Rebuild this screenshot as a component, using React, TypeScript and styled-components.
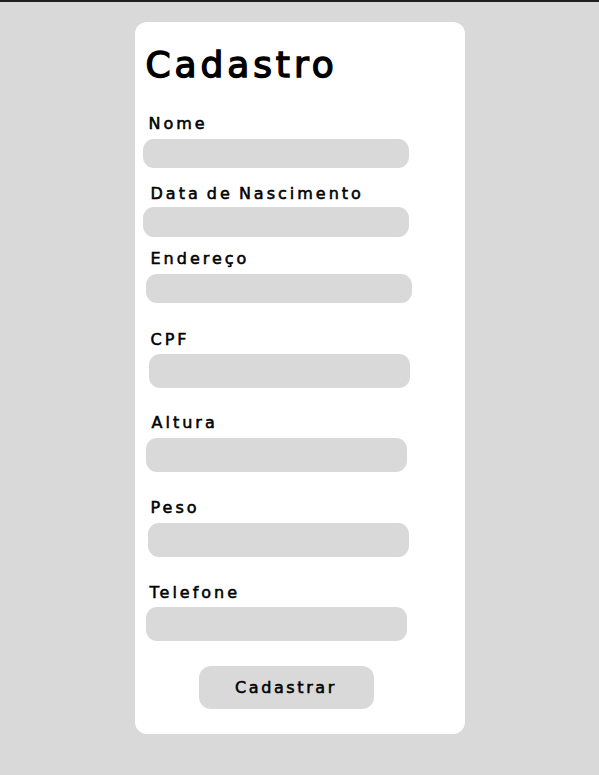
import React from "react";
import styled, { createGlobalStyle } from "styled-components";

const GlobalStyle = createGlobalStyle`
  html, body {
    margin: 0;
    padding: 0;
    background: #d9d9d9;
  }
  body {
    border-top: 2px solid #1f1f1f;
    min-height: 773px;
    font-family: "DejaVu Sans", Inter, sans-serif;
    color: #000;
  }
`;

const Page = styled.main`
  display: flex;
  justify-content: center;
  padding-top: 20px;
`;

const Card = styled.form`
  width: 330px;
  height: 712px;
  box-sizing: border-box;
  background: #fff;
  border-radius: 12px;
  padding: 25px 0 0 0;
  display: flex;
  flex-direction: column;
  align-items: flex-start;
`;

const Title = styled.h1`
  margin: 0 0 0 11px;
  font-size: 36px;
  line-height: 36px;
  font-weight: 400;
  letter-spacing: 3.9px;
  -webkit-text-stroke: 1.4px #000;
`;

const Field = styled.div<{ $top: number }>`
  display: flex;
  flex-direction: column;
  align-items: flex-start;
  margin-top: ${(p) => p.$top}px;
`;

const Label = styled.label<{ $indent: number; $gap: number }>`
  margin-left: ${(p) => p.$indent}px;
  margin-bottom: ${(p) => p.$gap}px;
  font-size: 16px;
  line-height: 20px;
  font-weight: 400;
  letter-spacing: 3px;
  word-spacing: -2px;
  -webkit-text-stroke: 0.55px #000;
`;

const Input = styled.input<{ $indent: number; $w: number; $h: number }>`
  margin: 0 0 0 ${(p) => p.$indent}px;
  width: ${(p) => p.$w}px;
  height: ${(p) => p.$h}px;
  box-sizing: border-box;
  border: none;
  outline: none;
  border-radius: 11px;
  background: #d9d9d9;
  padding: 0 12px;
  font-family: inherit;
  font-size: 15px;
`;

const Button = styled.button`
  margin: 25px 0 0 64px;
  width: 175px;
  height: 43px;
  border: none;
  border-radius: 12px;
  background: #d9d9d9;
  font-family: inherit;
  font-size: 16px;
  font-weight: 400;
  letter-spacing: 2.6px;
  -webkit-text-stroke: 0.55px #000;
  color: #000;
  cursor: pointer;
`;

type F = {
  label: string;
  top: number;
  labelIndent: number;
  gap: number;
  indent: number;
  w: number;
  h: number;
};

const fields: F[] = [
  { label: "Nome", top: 31, labelIndent: 14, gap: 5, indent: 8, w: 266, h: 29 },
  { label: "Data de Nascimento", top: 16, labelIndent: 16, gap: 3, indent: 8, w: 266, h: 30 },
  { label: "Endereço", top: 12, labelIndent: 16, gap: 5, indent: 11, w: 266, h: 29 },
  { label: "CPF", top: 27, labelIndent: 16, gap: 4, indent: 14, w: 261, h: 34 },
  { label: "Altura", top: 25, labelIndent: 17, gap: 5, indent: 11, w: 261, h: 34 },
  { label: "Peso", top: 26, labelIndent: 16, gap: 5, indent: 13, w: 261, h: 34 },
  { label: "Telefone", top: 26, labelIndent: 15, gap: 4, indent: 11, w: 261, h: 34 },
];

export default function App() {
  return (
    <>
      <GlobalStyle />
      <Page>
        <Card onSubmit={(e) => e.preventDefault()}>
          <Title>Cadastro</Title>
          {fields.map((f, i) => (
            <Field key={f.label} $top={f.top}>
              <Label htmlFor={`f${i}`} $indent={f.labelIndent} $gap={f.gap}>
                {f.label}
              </Label>
              <Input id={`f${i}`} $indent={f.indent} $w={f.w} $h={f.h} />
            </Field>
          ))}
          <Button type="submit">Cadastrar</Button>
        </Card>
      </Page>
    </>
  );
}
